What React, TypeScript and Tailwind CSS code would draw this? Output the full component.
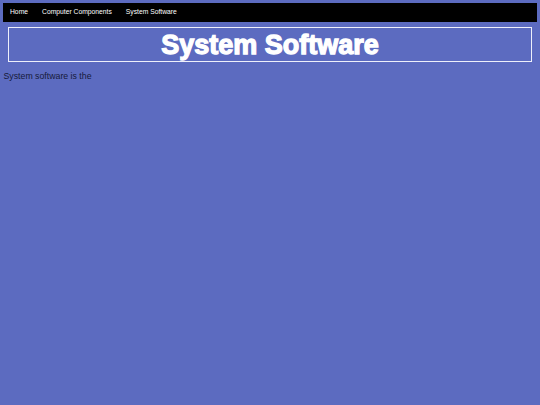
import React from "react";

export default function App() {
  return (
    <div
      className="min-h-[405px] bg-[#5c6bc0] p-[3px]"
      style={{ fontFamily: '"Liberation Sans", Arial, sans-serif' }}
    >
      <nav className="flex h-[19px] items-center gap-[14px] bg-black px-[7px] text-[6.75px] text-white">
        <span>Home</span>
        <span>Computer Components</span>
        <span>System Software</span>
      </nav>
      <div className="mx-[5px] mt-[5px] h-[35px] border-[1.5px] border-[#eef0fb] pt-[2px]">
        <h1 className="text-center text-[27px] font-bold leading-[30px] text-white [-webkit-text-stroke:1.3px_white]">
          System Software
        </h1>
      </div>
      <p className="mt-[9px] pl-[0.5px] text-[8.75px] leading-[10px] text-[#161a3a]">
        System software is the
      </p>
    </div>
  );
}
